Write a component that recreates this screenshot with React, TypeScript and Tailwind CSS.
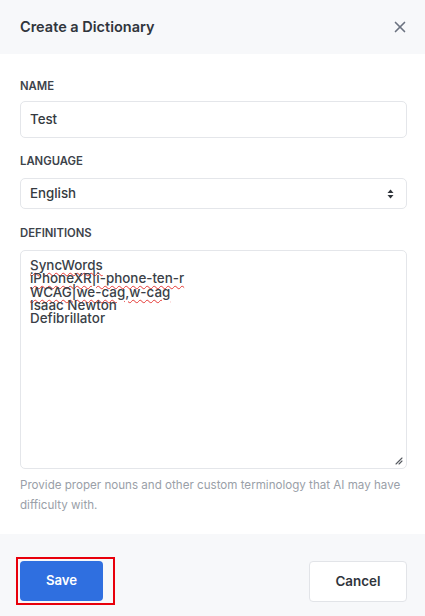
import { X } from "lucide-react";

const lines: { text: string; squiggle?: boolean }[] = [
    { text: "SyncWords", squiggle: true },
    { text: "iPhoneXR|i-phone-ten-r", squiggle: true },
    { text: "WCAG|we-cag,w-cag", squiggle: true },
    { text: "Isaac Newton" },
    { text: "Defibrillator" },
];

function Label({ children }: { children: string }) {
    return (
        <div className="text-[11.3px] leading-[16px] font-semibold uppercase text-[#3d434b]">
            {children}
        </div>
    );
}

export default function App() {
    return (
        <div className="w-[425px] h-[616px] bg-white flex flex-col font-['Inter','Liberation_Sans',sans-serif] text-[#343a40]">
            {/* header */}
            <div className="h-[54px] shrink-0 bg-[#f7f8fa] flex items-center justify-between pl-5 pr-4">
                <h1 className="text-[14.5px] font-semibold text-[#30353c]">Create a Dictionary</h1>
                <button className="text-[#6b7280]">
                    <X size={18} strokeWidth={2.2} />
                </button>
            </div>

            {/* body */}
            <div className="flex-1 pl-5 pr-[18px] pt-6">
                <Label>Name</Label>
                <div className="mt-[7px] h-[37px] rounded-[5px] border border-[#e4e6ea] flex items-center px-[9px] text-[13.3px] font-medium text-[#343a40]">
                    Test
                </div>

                <div className="mt-[15px]">
                    <Label>Language</Label>
                </div>
                <div className="mt-[9px] h-[31px] rounded-[5px] border border-[#e4e6ea] flex items-center justify-between pl-[9px] pr-[12px] text-[13.3px] font-medium text-[#343a40]">
                    <span>English</span>
                    <svg width="7" height="10" viewBox="0 0 7 10" className="text-[#2f343a]">
                        <path d="M3.5 0.5 L6.5 4 L0.5 4 Z" fill="currentColor" />
                        <path d="M3.5 9.5 L6.5 6 L0.5 6 Z" fill="currentColor" />
                    </svg>
                </div>

                <div className="mt-4">
                    <Label>Definitions</Label>
                </div>
                <div className="relative mt-[9px] h-[219px] rounded-[5px] border border-[#e4e6ea] px-[9px] pt-[8px] text-[13.4px] leading-[13.3px] font-medium text-[#3a3f47]">
                    {lines.map((l) => (
                        <div
                            key={l.text}
                            className={
                                l.squiggle
                                    ? "whitespace-pre underline decoration-wavy decoration-[#e53935] decoration-1 underline-offset-[2px]"
                                    : "whitespace-pre"
                            }
                        >
                            {l.text}
                        </div>
                    ))}
                    <svg width="8" height="8" viewBox="0 0 8 8" className="absolute right-[3px] bottom-[3px] text-[#55595f]">
                        <path d="M1 7 L7 1 M4 7 L7 4" stroke="currentColor" strokeWidth="1.1" strokeLinecap="round" />
                    </svg>
                </div>
                <p className="mt-[7px] text-[11.6px] leading-[19.5px] text-[#9aa0a8]">
                    Provide proper nouns and other custom terminology that AI may have difficulty with.
                </p>
            </div>

            {/* footer */}
            <div className="h-[82px] shrink-0 bg-[#f7f8fa] flex items-center justify-between pl-4 pr-[18px] pt-[23px] pb-[11px]">
                <div className="border-2 border-[#e8000b] pl-[2px] pr-[10px] py-[2px]">
                    <button className="w-[83px] h-[40px] rounded-[4px] bg-[#2f6fe0] text-white text-[13.2px] font-semibold">
                        Save
                    </button>
                </div>
                <button className="w-[98px] h-[41px] rounded-[4px] bg-white border border-[#e2e4e8] text-[13.4px] font-semibold text-[#30353c]">
                    Cancel
                </button>
            </div>
        </div>
    );
}
